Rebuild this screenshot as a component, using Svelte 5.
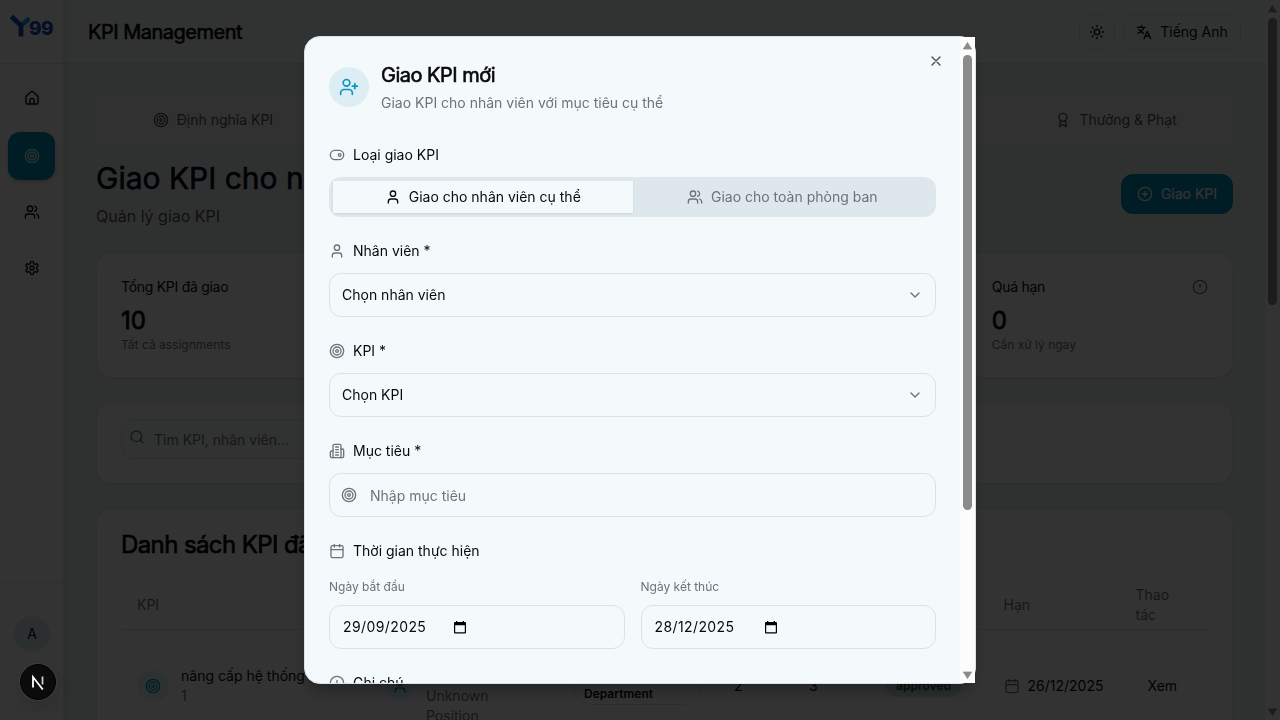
<script>
  const selects = [
    { icon: 'person', label: 'Nhân viên *', value: 'Chọn nhân viên' },
    { icon: 'target', label: 'KPI *', value: 'Chọn KPI' }
  ];
  const dates = [
    { label: 'Ngày bắt đầu', value: '29/09/2025' },
    { label: 'Ngày kết thúc', value: '28/12/2025' }
  ];
  const nav = ['home', 'target', 'people', 'settings'];
</script>

{#snippet icon(name, size = 16)}
  <svg class="icon" width={size} height={size} viewBox="0 0 24 24" fill="none" stroke="currentColor" stroke-width="2" stroke-linecap="round" stroke-linejoin="round" aria-hidden="true">
    {#if name === 'home'}
      <path d="M15 21v-6a2 2 0 0 0-2-2h-2a2 2 0 0 0-2 2v6" /><path d="M3 10a2 2 0 0 1 .709-1.528l7-5.999a2 2 0 0 1 2.582 0l7 5.999A2 2 0 0 1 21 10v9a2 2 0 0 1-2 2H5a2 2 0 0 1-2-2z" />
    {:else if name === 'target'}
      <circle cx="12" cy="12" r="10" /><circle cx="12" cy="12" r="6" /><circle cx="12" cy="12" r="2" />
    {:else if name === 'settings'}
      <path d="M12.220 2h-.440a2 2 0 0 0-2 2v.180a2 2 0 0 1-1 1.730l-.430.250a2 2 0 0 1-2 0l-.150-.080a2 2 0 0 0-2.730.730l-.220.380a2 2 0 0 0 .730 2.730l.150.100a2 2 0 0 1 1 1.720v.510a2 2 0 0 1-1 1.740l-.150.090a2 2 0 0 0-.730 2.730l.220.380a2 2 0 0 0 2.730.730l.150-.080a2 2 0 0 1 2 0l.430.250a2 2 0 0 1 1 1.730V20a2 2 0 0 0 2 2h.440a2 2 0 0 0 2-2v-.180a2 2 0 0 1 1-1.730l.430-.250a2 2 0 0 1 2 0l.150.080a2 2 0 0 0 2.730-.730l.220-.390a2 2 0 0 0-.730-2.730l-.150-.080a2 2 0 0 1-1-1.740v-.500a2 2 0 0 1 1-1.740l.150-.090a2 2 0 0 0 .730-2.730l-.220-.380a2 2 0 0 0-2.730-.730l-.150.080a2 2 0 0 1-2 0l-.430-.250a2 2 0 0 1-1-1.730V4a2 2 0 0 0-2-2z" /><circle cx="12" cy="12" r="3" />
    {:else if name === 'person'}
      <path d="M19 21v-2a4 4 0 0 0-4-4H9a4 4 0 0 0-4 4v2" /><circle cx="12" cy="7" r="4" />
    {:else if name === 'people'}
      <path d="M16 21v-2a4 4 0 0 0-4-4H6a4 4 0 0 0-4 4v2" /><circle cx="9" cy="7" r="4" /><path d="M22 21v-2a4 4 0 0 0-3-3.870" /><path d="M16 3.130a4 4 0 0 1 0 7.750" />
    {:else if name === 'plususer'}
      <path d="M16 21v-2a4 4 0 0 0-4-4H6a4 4 0 0 0-4 4v2" /><circle cx="9" cy="7" r="4" /><path d="M19 8v6M22 11h-6" />
    {:else if name === 'toggle'}
      <rect x="2" y="5" width="20" height="14" rx="7" /><circle cx="16" cy="12" r="2" />
    {:else if name === 'building'}
      <path d="M6 22V4a2 2 0 0 1 2-2h8a2 2 0 0 1 2 2v18Z" /><path d="M6 12H4a2 2 0 0 0-2 2v6a2 2 0 0 0 2 2h2M18 9h2a2 2 0 0 1 2 2v9a2 2 0 0 1-2 2h-2M10 6h4M10 10h4M10 14h4M10 18h4" />
    {:else if name === 'calendar'}
      <path d="M8 2v4M16 2v4M3 10h18" /><rect x="3" y="4" width="18" height="18" rx="2" />
    {:else if name === 'alert'}
      <circle cx="12" cy="12" r="10" /><path d="M12 8v4M12 16h.01" />
    {:else if name === 'plus'}
      <circle cx="12" cy="12" r="10" /><path d="M8 12h8M12 8v8" />
    {:else if name === 'search'}
      <circle cx="11" cy="11" r="8" /><path d="m21 21-4.300-4.300" />
    {:else if name === 'award'}
      <path d="m15.477 12.890 1.515 8.526a.5.5 0 0 1-.810.470l-3.580-2.687a1 1 0 0 0-1.197 0l-3.586 2.686a.5.5 0 0 1-.810-.469l1.514-8.526" /><circle cx="12" cy="8" r="6" />
    {:else if name === 'sun'}
      <circle cx="12" cy="12" r="4" /><path d="M12 2v2M12 20v2M4.930 4.930l1.410 1.410M17.660 17.660l1.410 1.410M2 12h2M20 12h2M6.340 17.660l-1.410 1.410M19.070 4.930l-1.410 1.410" />
    {:else if name === 'translate'}
      <path d="M2 5h12M8 2v3M12 5c-1 4-5 7-9 9M4.500 8c1.500 3 4 4.500 7 6M12 22l5-11 5 11M14 18h6" />
    {:else if name === 'chevron'}
      <path d="m6 9 6 6 6-6" />
    {:else if name === 'close'}
      <path d="M18 6 6 18M6 6l12 12" />
    {/if}
  </svg>
{/snippet}

{#snippet scrollbar(thumb)}
  <div class="scrollbar">
    <svg width="9" height="8" viewBox="0 0 9 8"><path d="M4.500 .5 8.600 7H.4Z" fill="#8b8b8b" stroke="#8b8b8b" stroke-linejoin="round" stroke-width=".8" /></svg>
    <div class="thumb" style:height="{thumb}px"></div>
    <svg class="down" width="9" height="8" viewBox="0 0 9 8"><path d="M4.500 7.500 .4 1h8.200Z" fill="#8b8b8b" stroke="#8b8b8b" stroke-linejoin="round" stroke-width=".8" /></svg>
  </div>
{/snippet}

<div class="app">
  <aside>
    <div class="logo">
      <svg width="20" height="24" viewBox="0 0 20 24" fill="none"><path d="M19.500 5.500 11 12.500" stroke="#0aa5cf" stroke-width="4.500" /><path d="M1.500 3.500 11 12.500v11" stroke="#1849b8" stroke-width="4.800" /></svg>
      <span>99</span>
    </div>
    <nav>
      {#each nav as item, i}
        <a href="#{item}" class:active={i === 1}>{@render icon(item)}</a>
      {/each}
    </nav>
    <div class="account"><span>A</span></div>
  </aside>

  <div class="main">
    <header>
      <h2>KPI Management</h2>
      <button class="theme">{@render icon('sun')}</button>
      <button class="lang">{@render icon('translate')}Tiếng Anh</button>
    </header>
    <main>
      <div class="tabs">
        <div>{@render icon('target')}Định nghĩa KPI</div>
        <div></div><div></div><div></div>
        <div>{@render icon('award')}Thưởng &amp; Phạt</div>
      </div>
      <div class="heading">
        <div>
          <h1>Giao KPI cho nhân viên</h1>
          <p>Quản lý giao KPI</p>
        </div>
        <button class="primary">{@render icon('plus')}Giao KPI</button>
      </div>
      <div class="stats">
        <div class="card"><h4>Tổng KPI đã giao</h4><strong>10</strong><small>Tất cả assignments</small></div>
        <div class="card"></div>
        <div class="card"></div>
        <div class="card"><h4>Quá hạn {@render icon('alert')}</h4><strong>0</strong><small>Cần xử lý ngay</small></div>
      </div>
      <div class="card filter"><div class="search">{@render icon('search')}<span>Tìm KPI, nhân viên...</span></div></div>
      <div class="card list">
        <h3>Danh sách KPI đã giao</h3>
        <div class="tr th"><div>KPI</div><div></div><div></div><div></div><div></div><div></div><div>Hạn</div><div>Thao tác</div></div>
        <div class="tr">
          <div class="who"><i>{@render icon('target')}</i><span>nâng cấp hệ thống<br /><em>1</em></span></div>
          <div class="who emp"><i>{@render icon('person')}</i><span><br /><br /><em>Unknown Position</em></span></div>
          <div><b class="dept"><br />Department</b></div>
          <div>2</div>
          <div>3</div>
          <div><b class="ok">approved</b></div>
          <div class="due">{@render icon('calendar')}26/12/2025</div>
          <div class="view">Xem</div>
        </div>
      </div>
    </main>
  </div>
  {@render scrollbar(287)}
</div>

<div class="overlay">
  <div class="modal" role="dialog" aria-modal="true">
    <div class="body">
      <div class="mhead">
        <div class="badge">{@render icon('plususer', 20)}</div>
        <div class="mtitle">
          <h2>Giao KPI mới</h2>
          <p>Giao KPI cho nhân viên với mục tiêu cụ thể</p>
        </div>
        <button class="close" aria-label="Đóng">{@render icon('close')}</button>
      </div>

      <div class="group">
        <div class="label">{@render icon('toggle')}Loại giao KPI</div>
        <div class="segment">
          <button class="on">{@render icon('person')}Giao cho nhân viên cụ thể</button>
          <button>{@render icon('people')}Giao cho toàn phòng ban</button>
        </div>
      </div>
      {#each selects as s}
        <div class="group">
          <div class="label">{@render icon(s.icon)}{s.label}</div>
          <div class="field"><span>{s.value}</span>{@render icon('chevron')}</div>
        </div>
      {/each}
      <div class="group">
        <div class="label">{@render icon('building')}Mục tiêu *</div>
        <div class="field goal">{@render icon('target')}<span>Nhập mục tiêu</span></div>
      </div>
      <div class="group time">
        <div class="label">{@render icon('calendar')}Thời gian thực hiện</div>
        <div class="dates">
          {#each dates as d}
            <div class="date">
              <small>{d.label}</small>
              <div class="field">
                <span>{d.value}</span>
                <svg width="12" height="13" viewBox="0 0 12 13"><path fill="#000" fill-rule="evenodd" d="M2 0h1.300v1h5.400V0H10v1h1a1 1 0 0 1 1 1v9.500a1 1 0 0 1-1 1H1a1 1 0 0 1-1-1V2a1 1 0 0 1 1-1h1ZM1.200 4.200v7.100h9.600V4.200Z" /></svg>
              </div>
            </div>
          {/each}
        </div>
      </div>
      <div class="label">{@render icon('alert')}Ghi chú</div>
    </div>
    {@render scrollbar(455)}
  </div>
</div>

<div class="dev">
  <svg width="18" height="18" viewBox="0 0 18 18" fill="none"><path d="M4 14.500V4l9.800 12.500" stroke="#fff" stroke-width="1.800" /><path d="M13.500 3.500v8" stroke="#ccc" stroke-width="1.800" /></svg>
</div>

<style>
  :global(body) { overflow: hidden; font-family: Inter, 'Noto Sans', sans-serif; font-size: 14px; line-height: 20px; color: #09090b; }
  * { box-sizing: border-box; }
  h1, h2, h3, h4, p { margin: 0; font-weight: 400; }
  button { font: inherit; color: inherit; border: 0; background: none; padding: 0; display: flex; align-items: center; justify-content: center; gap: 8px; white-space: nowrap; }
  .icon { flex: none; display: block; }
  .app { display: flex; width: 1280px; height: 720px; overflow: hidden; }
  aside { width: 64px; flex: none; display: flex; flex-direction: column; border-right: 1px solid #e6edef; background: #fff; box-shadow: 2px 0 10px rgba(0, 20, 20, .1); z-index: 1; }
  .logo { height: 64px; border-bottom: 1px solid #e0e7e9; padding: 13px 0 0 10px; display: flex; }
  .logo span { font-weight: 800; font-size: 19px; line-height: 31px; letter-spacing: -.6px; color: #1849b8; margin-left: -1px; }
  nav { flex: 1; padding: 10px 8px 0; display: flex; flex-direction: column; gap: 8px; }
  nav a { height: 48px; width: 47px; border-radius: 12px; display: grid; place-items: center; color: #09090b; }
  nav a:first-child { margin-bottom: 2px; }
  nav a.active { background: #0092b8; color: #e6f6fa; box-shadow: 0 2px 4px rgba(0, 0, 0, .2); }
  .account { height: 138px; border-top: 1px solid #dce5e8; padding: 33px 0 0 14px; }
  .account span { display: grid; place-items: center; width: 36px; height: 36px; border-radius: 50%; background: #dce9ee; }
  .main { width: 1201px; background: #e9f2f1; }
  header { height: 64px; background: #f4f9f9; border-bottom: 1px solid #dce6e9; padding: 0 24px; display: flex; align-items: center; }
  header h2 { flex: 1; font-size: 20px; letter-spacing: -.5px; -webkit-text-stroke: .6px; }
  header button { height: 36px; border: 1px solid #dbe5e7; border-radius: 12px; }
  .theme { width: 36px; margin-right: 8px; }
  .lang { width: 118px; }
  main { padding: 32px; }
  .tabs { height: 48px; padding: 0 4px; background: #f7f5f5; display: flex; }
  .tabs div { flex: 1; display: flex; align-items: center; justify-content: center; gap: 8px; color: #52525b; }
  .heading { display: flex; justify-content: space-between; align-items: center; height: 68px; margin-top: 16px; }
  .heading h1 { width: 208px; overflow: hidden; font-size: 30px; line-height: 36px; letter-spacing: 0; color: #020618; -webkit-text-stroke: .6px; white-space: nowrap; }
  .heading p { font-size: 16px; line-height: 24px; margin-top: 8px; color: #52525b; }
  .primary { width: 112px; height: 40px; border-radius: 12px; background: #0092b8; color: #f4fafc; -webkit-text-stroke: .2px; }
  .stats { display: grid; grid-template-columns: repeat(4, 1fr); gap: 24px; margin-top: 24px; }
  .card { background: #fff; border: 1px solid #e0e9ec; border-radius: 16px; padding: 24px; box-shadow: 0 1px 2px rgba(0, 0, 0, .05); }
  .stats .card { height: 126px; }
  h4 { display: flex; justify-content: space-between; align-items: center; letter-spacing: -.28px; }
  h4 .icon { color: #71717b; }
  .stats strong { display: block; margin-top: 8px; font-size: 24px; line-height: 32px; font-weight: 400; -webkit-text-stroke: .8px; }
  .stats small { display: block; font-size: 12px; line-height: 16px; color: #71717b; }
  .filter { height: 82px; margin-top: 24px; padding: 16px 24px; }
  .search { width: 350px; height: 40px; border: 1px solid #dbe5e7; border-radius: 12px; background: #f4f9f9; display: flex; gap: 9px; padding: 9px 7px; color: #71717b; }
  .search span { margin-top: 1px; }
  .list { height: 300px; margin-top: 24px; }
  .list h3 { font-size: 24px; line-height: 24px; letter-spacing: -.6px; -webkit-text-stroke: .7px; margin-bottom: 24px; }
  .tr { display: grid; grid-template-columns: 249px 187px 161px 75px 77px 117.500px 132px 89.500px; height: 112px; align-items: center; }
  .tr > div { padding: 0 16px; }
  .th { height: 49px; color: #71717b; border-bottom: 1px solid #dbe5e7; }
  .th > div { padding-right: 26px; }
  .who { display: flex; gap: 12px; align-items: center; white-space: nowrap; }
  .who em { font-style: normal; color: #71717b; white-space: normal; }
  .who i { width: 32px; height: 32px; flex: none; border-radius: 50%; background: #e5f4f8; color: #0092b8; display: grid; place-items: center; }
  .tr > .emp { white-space: normal; gap: 13px; padding-right: 12px; }
  .emp i { width: 27px; }
  .dept, .ok { font-size: 12px; line-height: 16px; font-weight: 600; display: block; }
  .dept { width: 128px; border: 1px solid #dbe5e7; border-radius: 19px; padding: 2px 10px; }
  .ok { width: 75px; height: 22px; padding: 3px 0; text-align: center; border-radius: 11px; background: #d0ece0; color: #075e3c; }
  .due { display: flex; gap: 8px; align-items: center; }
  .due .icon { color: #71717b; }
  .tr > .view { padding-left: 28px; }
  .scrollbar { width: 15px; flex: none; background: #fcfcfc; padding: 5px 3px 4px; display: flex; flex-direction: column; gap: 5px; }
  .scrollbar svg { display: block; flex: none; }
  .scrollbar .down { margin-top: auto; }
  .thumb { width: 9px; border-radius: 5px; background: #8b8b8b; flex: none; }
  .overlay { position: fixed; inset: 0; z-index: 5; background: rgba(0, 0, 0, .8); display: grid; place-items: center; }
  .modal { width: 672px; height: 648px; border: 1px solid #d5e4e9; border-radius: 16px; background: #f4fafc; display: flex; box-shadow: 0 10px 15px -3px rgba(0, 0, 0, .3); }
  .body { flex: 1; min-width: 0; height: 646px; overflow: hidden; padding: 24px; border-radius: 15px 0 0 15px; }
  .mhead { height: 84px; display: flex; align-items: flex-start; gap: 12px; }
  .badge { width: 40px; height: 40px; margin-top: 6px; border-radius: 50%; display: grid; place-items: center; background: #dceef4; color: #0c94c2; }
  .mtitle { flex: 1; }
  .mtitle h2 { font-size: 20px; line-height: 28px; letter-spacing: -.5px; -webkit-text-stroke: .6px; }
  .mtitle p { color: #71717b; margin-top: 4px; }
  .close { color: #4b4e52; width: 16px; height: 16px; margin: -8px -8px 0 0; }
  .group { margin-bottom: 24px; }
  .label { display: flex; align-items: center; gap: 8px; height: 20px; margin-bottom: 12px; }
  .label .icon { color: #71717b; }
  .segment { display: flex; height: 40px; padding: 4px; border-radius: 12px; background: #dee8ec; color: #71717b; }
  .segment button { flex: 1; }
  .segment .on { background: #f4fafc; color: #09090b; box-shadow: 0 1px 2px rgba(0, 0, 0, .08); }
  .field { height: 44px; border: 1px solid #d6e4e8; border-radius: 12px; padding: 0 12px; display: flex; align-items: center; justify-content: space-between; }
  .field .icon { color: #71717b; }
  .goal { justify-content: flex-start; gap: 13px; padding-left: 11px; color: #71717b; }
  .goal span { padding-top: 2px; }
  .time .label { margin-bottom: 18px; }
  .dates { display: flex; gap: 16px; }
  .date { flex: 1; }
  .date small { display: block; font-size: 12px; line-height: 16px; margin-bottom: 10px; color: #71717b; }
  .date .field { justify-content: flex-start; padding-left: 13px; letter-spacing: .4px; }
  .date .field span { width: 110.500px; }
  .dev { position: fixed; z-index: 9; left: 20px; top: 664px; width: 36px; height: 36px; border-radius: 50%; background: #0b0b0b; border: 1px solid #000; box-shadow: 0 0 0 1px #3d3d3d, 0 8px 20px rgba(0, 0, 0, .15); display: grid; place-items: center; }
</style>
